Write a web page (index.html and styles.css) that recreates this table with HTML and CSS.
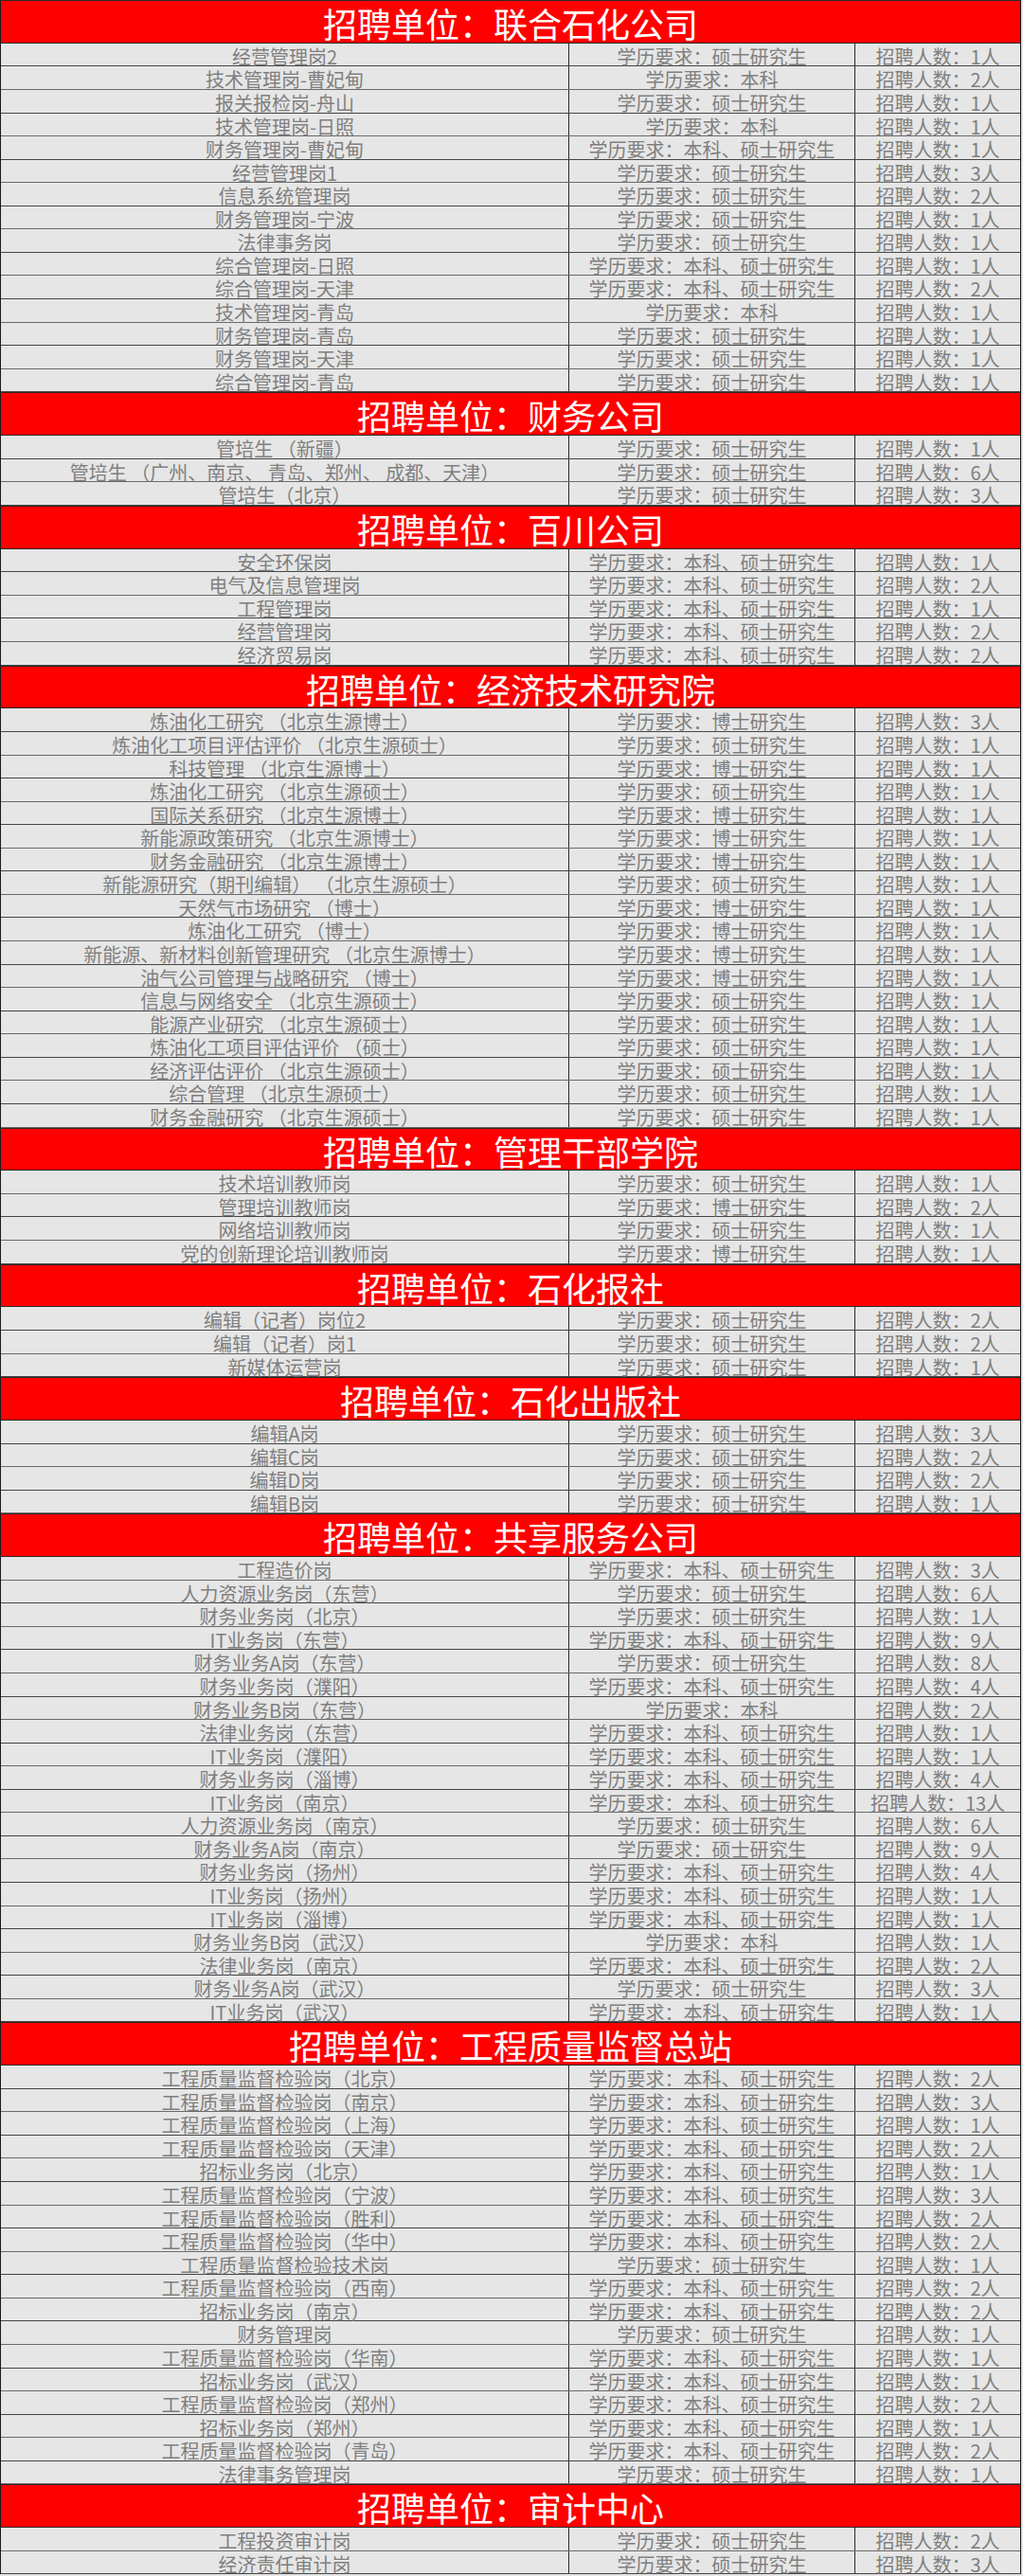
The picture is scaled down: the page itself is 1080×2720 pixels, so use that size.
FILE: index.html
```html
<!DOCTYPE html>
<html lang="zh-CN">
<head>
<meta charset="utf-8">
<title>招聘岗位</title>
<link rel="stylesheet" href="styles.css">
</head>
<body>
<div class="sheet">
  <div class="unit">招聘单位：联合石化公司</div>
  <div class="row"><div class="c1">经营管理岗2</div><div class="c2">学历要求：硕士研究生</div><div class="c3">招聘人数：1人</div></div>
  <div class="row"><div class="c1">技术管理岗-曹妃甸</div><div class="c2">学历要求：本科</div><div class="c3">招聘人数：2人</div></div>
  <div class="row"><div class="c1">报关报检岗-舟山</div><div class="c2">学历要求：硕士研究生</div><div class="c3">招聘人数：1人</div></div>
  <div class="row"><div class="c1">技术管理岗-日照</div><div class="c2">学历要求：本科</div><div class="c3">招聘人数：1人</div></div>
  <div class="row"><div class="c1">财务管理岗-曹妃甸</div><div class="c2">学历要求：本科、硕士研究生</div><div class="c3">招聘人数：1人</div></div>
  <div class="row"><div class="c1">经营管理岗1</div><div class="c2">学历要求：硕士研究生</div><div class="c3">招聘人数：3人</div></div>
  <div class="row"><div class="c1">信息系统管理岗</div><div class="c2">学历要求：硕士研究生</div><div class="c3">招聘人数：2人</div></div>
  <div class="row"><div class="c1">财务管理岗-宁波</div><div class="c2">学历要求：硕士研究生</div><div class="c3">招聘人数：1人</div></div>
  <div class="row"><div class="c1">法律事务岗</div><div class="c2">学历要求：硕士研究生</div><div class="c3">招聘人数：1人</div></div>
  <div class="row"><div class="c1">综合管理岗-日照</div><div class="c2">学历要求：本科、硕士研究生</div><div class="c3">招聘人数：1人</div></div>
  <div class="row"><div class="c1">综合管理岗-天津</div><div class="c2">学历要求：本科、硕士研究生</div><div class="c3">招聘人数：2人</div></div>
  <div class="row"><div class="c1">技术管理岗-青岛</div><div class="c2">学历要求：本科</div><div class="c3">招聘人数：1人</div></div>
  <div class="row"><div class="c1">财务管理岗-青岛</div><div class="c2">学历要求：硕士研究生</div><div class="c3">招聘人数：1人</div></div>
  <div class="row"><div class="c1">财务管理岗-天津</div><div class="c2">学历要求：硕士研究生</div><div class="c3">招聘人数：1人</div></div>
  <div class="row"><div class="c1">综合管理岗-青岛</div><div class="c2">学历要求：硕士研究生</div><div class="c3">招聘人数：1人</div></div>

  <div class="unit">招聘单位：财务公司</div>
  <div class="row"><div class="c1">管培生 （新疆）</div><div class="c2">学历要求：硕士研究生</div><div class="c3">招聘人数：1人</div></div>
  <div class="row"><div class="c1">管培生 （广州、南京、 青岛、郑州、 成都、天津）</div><div class="c2">学历要求：硕士研究生</div><div class="c3">招聘人数：6人</div></div>
  <div class="row"><div class="c1">管培生（北京）</div><div class="c2">学历要求：硕士研究生</div><div class="c3">招聘人数：3人</div></div>

  <div class="unit">招聘单位：百川公司</div>
  <div class="row"><div class="c1">安全环保岗</div><div class="c2">学历要求：本科、硕士研究生</div><div class="c3">招聘人数：1人</div></div>
  <div class="row"><div class="c1">电气及信息管理岗</div><div class="c2">学历要求：本科、硕士研究生</div><div class="c3">招聘人数：2人</div></div>
  <div class="row"><div class="c1">工程管理岗</div><div class="c2">学历要求：本科、硕士研究生</div><div class="c3">招聘人数：1人</div></div>
  <div class="row"><div class="c1">经营管理岗</div><div class="c2">学历要求：本科、硕士研究生</div><div class="c3">招聘人数：2人</div></div>
  <div class="row"><div class="c1">经济贸易岗</div><div class="c2">学历要求：本科、硕士研究生</div><div class="c3">招聘人数：2人</div></div>

  <div class="unit">招聘单位：经济技术研究院</div>
  <div class="row"><div class="c1">炼油化工研究 （北京生源博士）</div><div class="c2">学历要求：博士研究生</div><div class="c3">招聘人数：3人</div></div>
  <div class="row"><div class="c1">炼油化工项目评估评价 （北京生源硕士）</div><div class="c2">学历要求：硕士研究生</div><div class="c3">招聘人数：1人</div></div>
  <div class="row"><div class="c1">科技管理 （北京生源博士）</div><div class="c2">学历要求：博士研究生</div><div class="c3">招聘人数：1人</div></div>
  <div class="row"><div class="c1">炼油化工研究 （北京生源硕士）</div><div class="c2">学历要求：硕士研究生</div><div class="c3">招聘人数：1人</div></div>
  <div class="row"><div class="c1">国际关系研究 （北京生源博士）</div><div class="c2">学历要求：博士研究生</div><div class="c3">招聘人数：1人</div></div>
  <div class="row"><div class="c1">新能源政策研究 （北京生源博士）</div><div class="c2">学历要求：博士研究生</div><div class="c3">招聘人数：1人</div></div>
  <div class="row"><div class="c1">财务金融研究 （北京生源博士）</div><div class="c2">学历要求：博士研究生</div><div class="c3">招聘人数：1人</div></div>
  <div class="row"><div class="c1">新能源研究（期刊编辑） （北京生源硕士）</div><div class="c2">学历要求：硕士研究生</div><div class="c3">招聘人数：1人</div></div>
  <div class="row"><div class="c1">天然气市场研究 （博士）</div><div class="c2">学历要求：博士研究生</div><div class="c3">招聘人数：1人</div></div>
  <div class="row"><div class="c1">炼油化工研究 （博士）</div><div class="c2">学历要求：博士研究生</div><div class="c3">招聘人数：1人</div></div>
  <div class="row"><div class="c1">新能源、新材料创新管理研究 （北京生源博士）</div><div class="c2">学历要求：博士研究生</div><div class="c3">招聘人数：1人</div></div>
  <div class="row"><div class="c1">油气公司管理与战略研究 （博士）</div><div class="c2">学历要求：博士研究生</div><div class="c3">招聘人数：1人</div></div>
  <div class="row"><div class="c1">信息与网络安全 （北京生源硕士）</div><div class="c2">学历要求：硕士研究生</div><div class="c3">招聘人数：1人</div></div>
  <div class="row"><div class="c1">能源产业研究 （北京生源硕士）</div><div class="c2">学历要求：硕士研究生</div><div class="c3">招聘人数：1人</div></div>
  <div class="row"><div class="c1">炼油化工项目评估评价 （硕士）</div><div class="c2">学历要求：硕士研究生</div><div class="c3">招聘人数：1人</div></div>
  <div class="row"><div class="c1">经济评估评价 （北京生源硕士）</div><div class="c2">学历要求：硕士研究生</div><div class="c3">招聘人数：1人</div></div>
  <div class="row"><div class="c1">综合管理 （北京生源硕士）</div><div class="c2">学历要求：硕士研究生</div><div class="c3">招聘人数：1人</div></div>
  <div class="row"><div class="c1">财务金融研究 （北京生源硕士）</div><div class="c2">学历要求：硕士研究生</div><div class="c3">招聘人数：1人</div></div>

  <div class="unit">招聘单位：管理干部学院</div>
  <div class="row"><div class="c1">技术培训教师岗</div><div class="c2">学历要求：硕士研究生</div><div class="c3">招聘人数：1人</div></div>
  <div class="row"><div class="c1">管理培训教师岗</div><div class="c2">学历要求：博士研究生</div><div class="c3">招聘人数：2人</div></div>
  <div class="row"><div class="c1">网络培训教师岗</div><div class="c2">学历要求：硕士研究生</div><div class="c3">招聘人数：1人</div></div>
  <div class="row"><div class="c1">党的创新理论培训教师岗</div><div class="c2">学历要求：博士研究生</div><div class="c3">招聘人数：1人</div></div>

  <div class="unit">招聘单位：石化报社</div>
  <div class="row"><div class="c1">编辑（记者）岗位2</div><div class="c2">学历要求：硕士研究生</div><div class="c3">招聘人数：2人</div></div>
  <div class="row"><div class="c1">编辑（记者）岗1</div><div class="c2">学历要求：硕士研究生</div><div class="c3">招聘人数：2人</div></div>
  <div class="row"><div class="c1">新媒体运营岗</div><div class="c2">学历要求：硕士研究生</div><div class="c3">招聘人数：1人</div></div>

  <div class="unit">招聘单位：石化出版社</div>
  <div class="row"><div class="c1">编辑A岗</div><div class="c2">学历要求：硕士研究生</div><div class="c3">招聘人数：3人</div></div>
  <div class="row"><div class="c1">编辑C岗</div><div class="c2">学历要求：硕士研究生</div><div class="c3">招聘人数：2人</div></div>
  <div class="row"><div class="c1">编辑D岗</div><div class="c2">学历要求：硕士研究生</div><div class="c3">招聘人数：2人</div></div>
  <div class="row"><div class="c1">编辑B岗</div><div class="c2">学历要求：硕士研究生</div><div class="c3">招聘人数：1人</div></div>

  <div class="unit">招聘单位：共享服务公司</div>
  <div class="row"><div class="c1">工程造价岗</div><div class="c2">学历要求：本科、硕士研究生</div><div class="c3">招聘人数：3人</div></div>
  <div class="row"><div class="c1">人力资源业务岗（东营）</div><div class="c2">学历要求：硕士研究生</div><div class="c3">招聘人数：6人</div></div>
  <div class="row"><div class="c1">财务业务岗（北京）</div><div class="c2">学历要求：硕士研究生</div><div class="c3">招聘人数：1人</div></div>
  <div class="row"><div class="c1">IT业务岗（东营）</div><div class="c2">学历要求：本科、硕士研究生</div><div class="c3">招聘人数：9人</div></div>
  <div class="row"><div class="c1">财务业务A岗（东营）</div><div class="c2">学历要求：硕士研究生</div><div class="c3">招聘人数：8人</div></div>
  <div class="row"><div class="c1">财务业务岗（濮阳）</div><div class="c2">学历要求：本科、硕士研究生</div><div class="c3">招聘人数：4人</div></div>
  <div class="row"><div class="c1">财务业务B岗（东营）</div><div class="c2">学历要求：本科</div><div class="c3">招聘人数：2人</div></div>
  <div class="row"><div class="c1">法律业务岗（东营）</div><div class="c2">学历要求：本科、硕士研究生</div><div class="c3">招聘人数：1人</div></div>
  <div class="row"><div class="c1">IT业务岗（濮阳）</div><div class="c2">学历要求：本科、硕士研究生</div><div class="c3">招聘人数：1人</div></div>
  <div class="row"><div class="c1">财务业务岗（淄博）</div><div class="c2">学历要求：本科、硕士研究生</div><div class="c3">招聘人数：4人</div></div>
  <div class="row"><div class="c1">IT业务岗（南京）</div><div class="c2">学历要求：本科、硕士研究生</div><div class="c3">招聘人数：13人</div></div>
  <div class="row"><div class="c1">人力资源业务岗（南京）</div><div class="c2">学历要求：硕士研究生</div><div class="c3">招聘人数：6人</div></div>
  <div class="row"><div class="c1">财务业务A岗（南京）</div><div class="c2">学历要求：硕士研究生</div><div class="c3">招聘人数：9人</div></div>
  <div class="row"><div class="c1">财务业务岗（扬州）</div><div class="c2">学历要求：本科、硕士研究生</div><div class="c3">招聘人数：4人</div></div>
  <div class="row"><div class="c1">IT业务岗（扬州）</div><div class="c2">学历要求：本科、硕士研究生</div><div class="c3">招聘人数：1人</div></div>
  <div class="row"><div class="c1">IT业务岗（淄博）</div><div class="c2">学历要求：本科、硕士研究生</div><div class="c3">招聘人数：1人</div></div>
  <div class="row"><div class="c1">财务业务B岗（武汉）</div><div class="c2">学历要求：本科</div><div class="c3">招聘人数：1人</div></div>
  <div class="row"><div class="c1">法律业务岗（南京）</div><div class="c2">学历要求：本科、硕士研究生</div><div class="c3">招聘人数：2人</div></div>
  <div class="row"><div class="c1">财务业务A岗（武汉）</div><div class="c2">学历要求：硕士研究生</div><div class="c3">招聘人数：3人</div></div>
  <div class="row"><div class="c1">IT业务岗（武汉）</div><div class="c2">学历要求：本科、硕士研究生</div><div class="c3">招聘人数：1人</div></div>

  <div class="unit">招聘单位：工程质量监督总站</div>
  <div class="row"><div class="c1">工程质量监督检验岗（北京）</div><div class="c2">学历要求：本科、硕士研究生</div><div class="c3">招聘人数：2人</div></div>
  <div class="row"><div class="c1">工程质量监督检验岗（南京）</div><div class="c2">学历要求：本科、硕士研究生</div><div class="c3">招聘人数：3人</div></div>
  <div class="row"><div class="c1">工程质量监督检验岗（上海）</div><div class="c2">学历要求：本科、硕士研究生</div><div class="c3">招聘人数：1人</div></div>
  <div class="row"><div class="c1">工程质量监督检验岗（天津）</div><div class="c2">学历要求：本科、硕士研究生</div><div class="c3">招聘人数：2人</div></div>
  <div class="row"><div class="c1">招标业务岗（北京）</div><div class="c2">学历要求：本科、硕士研究生</div><div class="c3">招聘人数：1人</div></div>
  <div class="row"><div class="c1">工程质量监督检验岗（宁波）</div><div class="c2">学历要求：本科、硕士研究生</div><div class="c3">招聘人数：3人</div></div>
  <div class="row"><div class="c1">工程质量监督检验岗（胜利）</div><div class="c2">学历要求：本科、硕士研究生</div><div class="c3">招聘人数：2人</div></div>
  <div class="row"><div class="c1">工程质量监督检验岗（华中）</div><div class="c2">学历要求：本科、硕士研究生</div><div class="c3">招聘人数：2人</div></div>
  <div class="row"><div class="c1">工程质量监督检验技术岗</div><div class="c2">学历要求：硕士研究生</div><div class="c3">招聘人数：1人</div></div>
  <div class="row"><div class="c1">工程质量监督检验岗（西南）</div><div class="c2">学历要求：本科、硕士研究生</div><div class="c3">招聘人数：2人</div></div>
  <div class="row"><div class="c1">招标业务岗（南京）</div><div class="c2">学历要求：本科、硕士研究生</div><div class="c3">招聘人数：2人</div></div>
  <div class="row"><div class="c1">财务管理岗</div><div class="c2">学历要求：硕士研究生</div><div class="c3">招聘人数：1人</div></div>
  <div class="row"><div class="c1">工程质量监督检验岗（华南）</div><div class="c2">学历要求：本科、硕士研究生</div><div class="c3">招聘人数：1人</div></div>
  <div class="row"><div class="c1">招标业务岗（武汉）</div><div class="c2">学历要求：本科、硕士研究生</div><div class="c3">招聘人数：1人</div></div>
  <div class="row"><div class="c1">工程质量监督检验岗（郑州）</div><div class="c2">学历要求：本科、硕士研究生</div><div class="c3">招聘人数：2人</div></div>
  <div class="row"><div class="c1">招标业务岗（郑州）</div><div class="c2">学历要求：本科、硕士研究生</div><div class="c3">招聘人数：1人</div></div>
  <div class="row"><div class="c1">工程质量监督检验岗（青岛）</div><div class="c2">学历要求：本科、硕士研究生</div><div class="c3">招聘人数：2人</div></div>
  <div class="row"><div class="c1">法律事务管理岗</div><div class="c2">学历要求：硕士研究生</div><div class="c3">招聘人数：1人</div></div>

  <div class="unit">招聘单位：审计中心</div>
  <div class="row"><div class="c1">工程投资审计岗</div><div class="c2">学历要求：硕士研究生</div><div class="c3">招聘人数：2人</div></div>
  <div class="row"><div class="c1">经济责任审计岗</div><div class="c2">学历要求：硕士研究生</div><div class="c3">招聘人数：3人</div></div>
</div>
</body>
</html>
```

FILE: styles.css
```css
html, body {
  margin: 0;
  padding: 0;
  background: #e6e6e6;
}

body {
  font-family: "Noto Sans CJK SC", "Noto Sans", sans-serif;
}

.sheet {
  width: 1078px;
  display: flex;
  flex-direction: column;
  border-left: 1px solid #1a1a1a;
  border-right: 1px solid #1a1a1a;
  box-sizing: border-box;
}

.unit {
  height: 45.86px;
  box-sizing: border-box;
  background: #ff0000;
  color: #ffffff;
  font-size: 36px;
  line-height: 36px;
  padding-top: 5px;
  text-align: center;
  border-top: 1px solid #2a2a2a;
  border-bottom: 1px solid #2a2a2a;
  white-space: nowrap;
}

.row {
  height: 24.57px;
  box-sizing: border-box;
  display: grid;
  grid-template-columns: 600px 302px 1fr;
  background: #e6e6e6;
  border-bottom: 1px solid #454545;
  color: #7f7f7f;
  font-size: 20px;
  line-height: 19px;
}

.row:nth-child(odd) {
  border-bottom-color: #6a6a6a;
}

.c1, .c2, .c3 {
  text-align: center;
  white-space: nowrap;
  padding-top: 4px;
}

.c1, .c2 {
  border-right: 1px solid #2a2a2a;
}
```
